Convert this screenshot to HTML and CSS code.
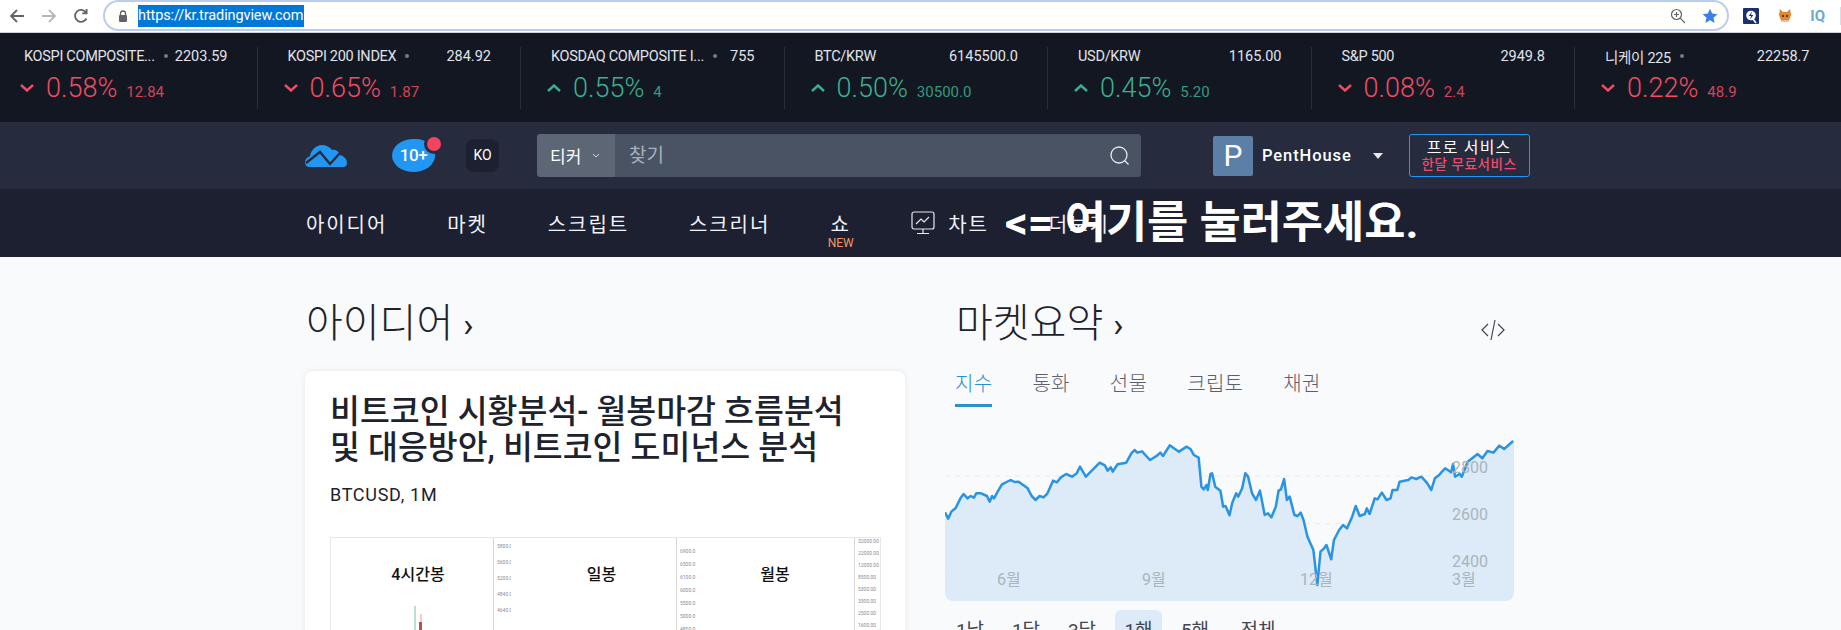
FILE: index.html
```html
<!DOCTYPE html>
<html lang="ko">
<head>
  <meta charset="UTF-8" />
  <title>TradingView</title>
  <link rel="stylesheet" href="styles.css">
</head>
<body>
  <!-- Browser toolbar -->
  <div class="toolbar">
    <svg class="tool-icon" width="16" height="16" viewBox="0 0 16 16"><path d="M15 8H2M8 2L2 8l6 6" fill="none" stroke="#5f6368" stroke-width="1.8"/></svg>
    <svg class="tool-icon" width="16" height="16" viewBox="0 0 16 16"><path d="M1 8h13M8 2l6 6-6 6" fill="none" stroke="#b4b7ba" stroke-width="1.8"/></svg>
    <svg class="tool-icon" width="16" height="16" viewBox="0 0 16 16"><path d="M13.5 10.5A6 6 0 1 1 13 4.5M13.6 1v4.4H9.2" fill="none" stroke="#5f6368" stroke-width="1.8"/></svg>
    <div class="urlbar">
      <svg class="lock" width="10" height="12" viewBox="0 0 10 12"><path d="M2.5 5V3.5a2.5 2.5 0 0 1 5 0V5" fill="none" stroke="#5f6368" stroke-width="1.3"/><rect x="1" y="5" width="8" height="7" rx="1" fill="#5f6368"/></svg>
      <span class="url-text">https://kr.tradingview.com</span>
      <svg class="url-zoom" width="16" height="16" viewBox="0 0 16 16"><circle cx="6.5" cy="6.5" r="5" fill="none" stroke="#5f6368" stroke-width="1.2"/><path d="M6.5 4v5M4 6.5h5M10.2 10.2L15 15" fill="none" stroke="#5f6368" stroke-width="1.2"/></svg>
      <svg class="url-star" width="16" height="16" viewBox="0 0 16 16"><path d="M8 .8l2.2 4.8 5.2.6-3.9 3.5 1.1 5.2L8 12.3l-4.6 2.6 1.1-5.2L.6 6.2l5.2-.6z" fill="#3b82e6"/></svg>
    </div>
    <div class="extensions">
      <svg width="16" height="16" viewBox="0 0 16 16"><rect width="16" height="16" rx="1" fill="#1a2f6e"/><circle cx="8" cy="7.5" r="4.8" fill="#fff"/><path d="M9 3.5L5.8 8h2.4L7 11.5 10.4 7H8z" fill="#1a2f6e"/><path d="M10 11l3 4" stroke="#fff" stroke-width="1.6"/></svg>
      <svg width="12" height="13" viewBox="0 0 12 13"><path d="M1 0l3 3h4l3-3 1 6-1 3-2 4H3L1 9 0 6z" fill="#e2852b"/><path d="M3 6h2v2H3zM7 6h2v2H7z" fill="#5b3a1c"/><path d="M3 11h6v2H3z" fill="#d9c3a8"/></svg>
      <span class="ext-iq">IQ</span>
      <span class="ext-sep"></span>
    </div>
  </div>

  <!-- Ticker tape -->
  <div class="ticker">
    <div class="ticker-item">
      <div class="ticker-top"><span class="ticker-name">KOSPI COMPOSITE...</span><span class="dot"></span><span class="ticker-price">2203.59</span></div>
      <div class="ticker-change down"><svg class="chev" width="14" height="8" viewBox="0 0 14 8"><path d="M1 1l6 5.5L13 1"/></svg><span class="pct">0.58%</span><span class="abs">12.84</span></div>
    </div>
    <div class="ticker-item">
      <div class="ticker-top"><span class="ticker-name">KOSPI 200 INDEX</span><span class="dot"></span><span class="ticker-price">284.92</span></div>
      <div class="ticker-change down"><svg class="chev" width="14" height="8" viewBox="0 0 14 8"><path d="M1 1l6 5.5L13 1"/></svg><span class="pct">0.65%</span><span class="abs">1.87</span></div>
    </div>
    <div class="ticker-item">
      <div class="ticker-top"><span class="ticker-name">KOSDAQ COMPOSITE I...</span><span class="dot"></span><span class="ticker-price">755</span></div>
      <div class="ticker-change up"><svg class="chev" width="14" height="8" viewBox="0 0 14 8"><path d="M1 7l6-5.5L13 7"/></svg><span class="pct">0.55%</span><span class="abs">4</span></div>
    </div>
    <div class="ticker-item">
      <div class="ticker-top"><span class="ticker-name">BTC/KRW</span><span class="ticker-price">6145500.0</span></div>
      <div class="ticker-change up"><svg class="chev" width="14" height="8" viewBox="0 0 14 8"><path d="M1 7l6-5.5L13 7"/></svg><span class="pct">0.50%</span><span class="abs">30500.0</span></div>
    </div>
    <div class="ticker-item">
      <div class="ticker-top"><span class="ticker-name">USD/KRW</span><span class="ticker-price">1165.00</span></div>
      <div class="ticker-change up"><svg class="chev" width="14" height="8" viewBox="0 0 14 8"><path d="M1 7l6-5.5L13 7"/></svg><span class="pct">0.45%</span><span class="abs">5.20</span></div>
    </div>
    <div class="ticker-item">
      <div class="ticker-top"><span class="ticker-name">S&amp;P 500</span><span class="ticker-price">2949.8</span></div>
      <div class="ticker-change down"><svg class="chev" width="14" height="8" viewBox="0 0 14 8"><path d="M1 1l6 5.5L13 1"/></svg><span class="pct">0.08%</span><span class="abs">2.4</span></div>
    </div>
    <div class="ticker-item">
      <div class="ticker-top"><span class="ticker-name">니케이 225</span><span class="dot"></span><span class="ticker-price">22258.7</span></div>
      <div class="ticker-change down"><svg class="chev" width="14" height="8" viewBox="0 0 14 8"><path d="M1 1l6 5.5L13 1"/></svg><span class="pct">0.22%</span><span class="abs">48.9</span></div>
    </div>
  </div>

  <!-- Site header -->
  <div class="header">
    <div class="wrap header-row">
      <svg class="logo" width="42" height="22" viewBox="0 0 42 22"><path d="M4 22C1 22 0 19 0 17c0-3 3-5 5-6C6 5 11 0 17 0c4 0 8 2 10 5 3-1 7 1 8 5 4 1 7 4 7 8 0 3-2 4-4 4z" fill="#2196f3"/><path d="M1 18L15 7l10 12 10-11" fill="none" stroke="#262b3e" stroke-width="2.4"/></svg>
      <div class="badge">10+<span class="badge-dot"></span></div>
      <div class="lang">KO</div>
      <div class="search">
        <div class="search-type">티커<svg width="8" height="5" viewBox="0 0 8 5"><path d="M1 1l3 3 3-3" fill="none" stroke="#d1d4dc" stroke-width="1"/></svg></div>
        <div class="search-input"><span class="search-hint">찾기</span><svg width="21" height="21" viewBox="0 0 21 21"><circle cx="10" cy="10" r="8" fill="none" stroke="#e6e8ee" stroke-width="1.3"/><path d="M15.5 15.5l4 4" stroke="#e6e8ee" stroke-width="1.3"/></svg></div>
      </div>
      <div class="avatar">P</div>
      <span class="username">PentHouse</span>
      <span class="caret"></span>
      <div class="pro">
        <span class="pro-top">프로 서비스</span>
        <span class="pro-bottom">한달 무료서비스</span>
      </div>
    </div>
  </div>

  <!-- Main nav -->
  <div class="nav">
    <div class="wrap nav-row">
      <span class="nav-item">아이디어</span>
      <span class="nav-item">마켓</span>
      <span class="nav-item">스크립트</span>
      <span class="nav-item">스크리너</span>
      <span class="nav-item nav-show">쇼<small>NEW</small></span>
      <span class="nav-item nav-chart"><svg width="24" height="24" viewBox="0 0 24 24"><rect x="1" y="1" width="22" height="17" rx="2" fill="none" stroke="#e6e8ee" stroke-width="1.2"/><path d="M5 13l5-5 3 3 5-5M12 18v4M6 22.5h12" fill="none" stroke="#e6e8ee" stroke-width="1.2"/></svg>차트</span>
      <span class="nav-item">더보기</span>
    </div>
    <div class="callout">&lt;= 여기를 눌러주세요.</div>
  </div>

  <!-- Page content -->
  <div class="wrap content">
    <div class="left-col">
      <h2 class="section-title">아이디어<span class="arrow">›</span></h2>
      <div class="card">
        <h3 class="card-title">비트코인 시황분석- 월봉마감 흐름분석<br>및 대응방안, 비트코인 도미넌스 분석</h3>
        <div class="card-symbol">BTCUSD, 1M</div>
        <div class="snapshot">
          <div class="panel panel-a">
            <span class="panel-label">4시간봉</span>
            <svg class="candles" width="20" height="50" viewBox="0 0 20 50"><path d="M6 0v50" stroke="#7fc4a0"/><path d="M12 8v42" stroke="#e89a9a"/><rect x="4" y="30" width="3" height="20" fill="#4caf7d"/><rect x="10" y="16" width="3" height="34" fill="#b5534f"/></svg>
          </div>
          <div class="axis">
            <span>5800.0</span><span>5600.0</span><span>5200.0</span><span>4840.0</span><span>4640.0</span>
          </div>
          <div class="panel panel-b"><span class="panel-label">일봉</span></div>
          <div class="axis axis-b">
            <span>6900.0</span><span>6500.0</span><span>6100.0</span><span>6000.0</span><span>5500.0</span><span>5000.0</span><span>4800.0</span>
          </div>
          <div class="panel panel-c">
            <span class="panel-label">월봉</span>
            <svg class="candles" width="12" height="14" viewBox="0 0 12 14"><path d="M5 0v14" stroke="#e89a9a"/><rect x="2" y="6" width="6" height="8" fill="#9a9a9a"/></svg>
          </div>
          <div class="axis axis-c">
            <span>32000.00</span><span>22000.00</span><span>12000.00</span><span>8500.00</span><span>5300.00</span><span>3300.00</span><span>2500.00</span><span>1600.00</span>
          </div>
        </div>
      </div>
    </div>

    <div class="right-col">
      <div class="market-head">
        <h2 class="section-title">마켓요약<span class="arrow">›</span></h2>
        <svg class="embed" width="26" height="22" viewBox="0 0 26 22"><path d="M8 5l-6 6 6 6M18 5l6 6-6 6M15 1l-4 20" fill="none" stroke="#434651" stroke-width="1.2"/></svg>
      </div>
      <div class="tabs">
        <span class="tab active">지수</span>
        <span class="tab">통화</span>
        <span class="tab">선물</span>
        <span class="tab">크립토</span>
        <span class="tab">채권</span>
      </div>
      <div class="market-chart">
        <svg class="market-svg" viewBox="39 480 1438 483" preserveAspectRatio="none">
          <path class="area" d="M39 697L47 716 55 695 66 684 78 655 86 642 96 655 104 648 112 653 118 640 130 640 145 648 152 665 158 648 163 655 172 635 183 613 205 600 215 606 225 605 248 625 258 648 268 660 278 648 288 652 298 640 312 602 322 607 332 592 345 582 360 590 372 580 380 560 395 590 405 578 430 548 443 556 450 572 458 562 463 575 475 553 497 548 510 520 518 510 525 518 537 514 557 540 575 527 583 518 590 528 607 496 630 515 650 500 660 508 668 525 680 533 687 620 693 628 700 615 703 630 710 582 714 580 722 620 735 632 742 680 748 678 758 706 765 668 775 640 780 650 790 625 798 580 805 590 815 640 825 660 835 632 847 705 855 700 864 712 875 680 882 632 888 628 896 597 903 660 910 650 922 705 930 708 938 698 945 720 955 770 970 810 980 915 988 815 997 805 1003 795 1015 838 1022 780 1035 750 1045 735 1055 745 1068 710 1077 678 1087 708 1100 702 1105 685 1112 702 1125 655 1132 658 1143 638 1155 660 1165 655 1170 630 1182 630 1188 605 1210 600 1218 592 1230 597 1243 590 1258 610 1268 630 1277 595 1288 585 1295 575 1303 565 1318 577 1323 552 1328 590 1340 582 1345 590 1360 545 1385 522 1397 535 1410 513 1425 518 1440 497 1452 507 1477 483V963H39Z"/>
          <path class="grid-line" d="M39 588H1477M39 731H1477M39 872H1477"/>
          <path class="line" d="M39 697L47 716 55 695 66 684 78 655 86 642 96 655 104 648 112 653 118 640 130 640 145 648 152 665 158 648 163 655 172 635 183 613 205 600 215 606 225 605 248 625 258 648 268 660 278 648 288 652 298 640 312 602 322 607 332 592 345 582 360 590 372 580 380 560 395 590 405 578 430 548 443 556 450 572 458 562 463 575 475 553 497 548 510 520 518 510 525 518 537 514 557 540 575 527 583 518 590 528 607 496 630 515 650 500 660 508 668 525 680 533 687 620 693 628 700 615 703 630 710 582 714 580 722 620 735 632 742 680 748 678 758 706 765 668 775 640 780 650 790 625 798 580 805 590 815 640 825 660 835 632 847 705 855 700 864 712 875 680 882 632 888 628 896 597 903 660 910 650 922 705 930 708 938 698 945 720 955 770 970 810 980 915 988 815 997 805 1003 795 1015 838 1022 780 1035 750 1045 735 1055 745 1068 710 1077 678 1087 708 1100 702 1105 685 1112 702 1125 655 1132 658 1143 638 1155 660 1165 655 1170 630 1182 630 1188 605 1210 600 1218 592 1230 597 1243 590 1258 610 1268 630 1277 595 1288 585 1295 575 1303 565 1318 577 1323 552 1328 590 1340 582 1345 590 1360 545 1385 522 1397 535 1410 513 1425 518 1440 497 1452 507 1475 483"/>
        </svg>
        <span class="y-label y-2800">2800</span>
        <span class="y-label y-2600">2600</span>
        <span class="y-label y-2400">2400</span>
        <span class="x-label x-jun">6월</span>
        <span class="x-label x-sep">9월</span>
        <span class="x-label x-dec">12월</span>
        <span class="x-label x-mar">3월</span>
      </div>
      <div class="ranges">
        <span class="range">1날</span>
        <span class="range">1달</span>
        <span class="range">3달</span>
        <span class="range active">1해</span>
        <span class="range">5해</span>
        <span class="range range-all">전체</span>
      </div>
    </div>
  </div>
</body>
</html>
```

FILE: styles.css
```css
/* Global */
html, body {
  height: 630px;
  overflow: hidden;
}

body {
  margin: 0;
  background: #f9fafb;
  color: #131722;
  font-family: Roboto, 'Noto Sans CJK KR', sans-serif;
}

.wrap {
  width: 1231px;
  margin: 0 auto;
}

/* Browser toolbar */
.toolbar {
  height: 33px;
  background: #fff;
  box-sizing: border-box;
  border-bottom: 1px solid #d0d2d6;
  display: flex;
  align-items: flex-start;
  padding-left: 9px;
}

.tool-icon {
  margin: 8px 16px 0 0;
}

.urlbar {
  margin-left: -2px;
  width: 1627px;
  height: 31px;
  box-sizing: border-box;
  border: 2px solid #b9cdf1;
  border-top-width: 2px;
  border-radius: 16px;
  display: flex;
  align-items: center;
  padding: 0 9px 0 13px;
  background: #fffffb;
}

.lock {
  margin-right: 10px;
}

.url-text {
  background: #0078d7;
  color: #fff;
  font-size: 14.5px;
  line-height: 22px;
  width: 166px;
  white-space: nowrap;
  letter-spacing: -0.1px;
}

.url-zoom {
  margin-left: auto;
  margin-right: 16px;
}

.extensions {
  display: flex;
  align-items: center;
  height: 31px;
  padding-left: 14px;
}

.extensions svg:nth-child(2) {
  margin-left: 20px;
}

.ext-iq {
  margin-left: 19px;
  color: #6aa8d8;
  font-size: 15px;
  font-weight: 700;
}

.ext-sep {
  margin-left: 15px;
  width: 1px;
  height: 18px;
  background: #dcdde0;
}

/* Ticker tape */
.ticker {
  height: 89px;
  background: #131722;
  box-sizing: border-box;
  padding: 14px 0 0;
  display: flex;
  margin-left: -6px;
  width: 1860px;
}

.ticker-item {
  width: 263.5px;
  flex: none;
  height: 62px;
  box-sizing: border-box;
  padding: 0 29px 0 30px;
  border-right: 1px solid #2a2e39;
}

.ticker-item:last-child {
  border-right: 0;
}

.ticker-top {
  display: flex;
  align-items: center;
  height: 18px;
  color: #e0e3eb;
  font-size: 14.5px;
}

.ticker-name {
  white-space: nowrap;
  letter-spacing: -0.3px;
}

.dot {
  width: 4px;
  height: 4px;
  border-radius: 50%;
  background: #787b86;
  margin-left: 9px;
}

.ticker-price {
  margin-left: auto;
}

.ticker-change {
  display: flex;
  align-items: baseline;
  margin: 8px 0 0 -4px;
  height: 30px;
}

.chev {
  align-self: center;
  fill: none;
  stroke: currentColor;
  stroke-width: 2.4;
  margin-right: 12px;
}

.pct {
  font-size: 27px;
  font-weight: 300;
  line-height: 30px;
}

.abs {
  font-size: 15px;
  margin-left: 9px;
  opacity: 0.85;
}

.up {
  color: #3bb08f;
}

.down {
  color: #ef4d62;
}

/* Site header */
.header {
  height: 67px;
  background: #262b3e;
}

.header-row {
  height: 100%;
  display: flex;
  align-items: center;
  color: #fff;
}

.badge {
  position: relative;
  margin-left: 45px;
  width: 43px;
  height: 33px;
  border-radius: 50% 45% 50% 50%;
  background: #2196f3;
  font-size: 17px;
  font-weight: 500;
  letter-spacing: -0.5px;
  line-height: 33px;
  text-align: center;
}

.badge-dot {
  position: absolute;
  top: -2px;
  right: -6px;
  width: 14px;
  height: 14px;
  border-radius: 50%;
  background: #f5425e;
  box-shadow: 0 0 0 3px #262b3e;
}

.lang {
  margin-left: 31px;
  width: 33px;
  height: 33px;
  border-radius: 8px;
  background: #1c2030;
  font-size: 14px;
  line-height: 33px;
  text-align: center;
}

.search {
  margin-left: 38px;
  width: 604px;
  height: 43px;
  display: flex;
  border-radius: 3px;
  overflow: hidden;
}

.search-type {
  width: 78px;
  flex: none;
  box-sizing: border-box;
  padding-left: 13px;
  background: #5d6675;
  font-size: 17px;
  display: flex;
  align-items: center;
  gap: 11px;
}

.search-input {
  flex: 1;
  background: #4a5364;
  color: #a8afba;
  font-size: 19px;
  padding: 0 11px 0 14px;
  display: flex;
  align-items: center;
  justify-content: space-between;
}

.search-hint {
  margin-bottom: 4px;
}

.avatar {
  margin-left: 72px;
  width: 40px;
  height: 40px;
  border-radius: 2px;
  background: #5b7fa6;
  font-size: 30px;
  line-height: 40px;
  text-align: center;
}

.username {
  margin-left: 9px;
  font-size: 16.5px;
  font-weight: 500;
  letter-spacing: 0.9px;
}

.caret {
  margin-left: 21px;
  border: 5px solid transparent;
  border-top: 6px solid #e6e8ee;
  border-bottom: 0;
}

.pro {
  margin-left: 26px;
  width: 121px;
  height: 43px;
  box-sizing: border-box;
  border: 1px solid #2196f3;
  border-radius: 3px;
  display: flex;
  flex-direction: column;
  align-items: center;
  justify-content: center;
  line-height: 16px;
}

.pro-top {
  font-size: 16px;
  letter-spacing: 1.2px;
}

.pro-bottom {
  font-size: 13.5px;
  font-weight: 500;
  color: #f5496b;
  letter-spacing: 0.6px;
}

/* Main nav */
.nav {
  position: relative;
  height: 68px;
  background: #1c2030;
}

.nav-row {
  height: 100%;
  display: flex;
  align-items: center;
  gap: 60px;
  color: #f0f3fa;
}

.nav-item {
  font-size: 20px;
  font-weight: 400;
  letter-spacing: 1.9px;
  white-space: nowrap;
}

.nav-item:first-child {
  margin-left: 1px;
}

.nav-show {
  position: relative;
  width: 27px;
  margin-left: -3px;
  text-align: center;
}

.nav-show small {
  position: absolute;
  top: 27px;
  left: 0;
  width: 27px;
  font-size: 12px;
  letter-spacing: 0;
  color: #f79560;
}

.nav-chart {
  display: flex;
  align-items: center;
  gap: 13px;
  margin-left: -3px;
}

/* Drawn over the nav by whoever took the screenshot */
.callout {
  position: absolute;
  left: 1005px;
  top: 4px;
  color: #fff;
  font-size: 44.8px;
  font-weight: 700;
  line-height: 60px;
  white-space: nowrap;
}

/* Page content */
.content {
  display: flex;
  gap: 40px;
}

.left-col {
  width: 600px;
  flex: none;
}

.right-col {
  width: 569px;
  flex: none;
}

.section-title {
  margin: 0;
  padding-top: 43px;
  font-size: 40px;
  font-weight: 300;
  line-height: 48px;
  color: #1e222d;
}

.left-col .section-title {
  padding-left: 1px;
}

.arrow {
  margin-left: 10px;
  font-weight: 400;
  font-size: 34px;
}

.card {
  margin-top: 22px;
  height: 300px;
  box-sizing: border-box;
  background: #fff;
  border-radius: 8px;
  box-shadow: 0 0 6px rgba(0, 0, 0, 0.08);
  padding: 23px 25px 0;
}

.card-title {
  margin: 0;
  font-size: 32.5px;
  font-weight: 500;
  line-height: 36px;
  color: #1e222d;
  white-space: nowrap;
}

.card-symbol {
  margin-top: 17px;
  font-size: 18px;
  line-height: 24px;
  letter-spacing: 0.7px;
  color: #1e222d;
}

.snapshot {
  margin-top: 30px;
  display: flex;
  height: 120px;
  border: 1px solid #e6e8ea;
  width: 551px;
  box-sizing: border-box;
}

.panel {
  position: relative;
  display: flex;
  justify-content: center;
  color: #111;
}

.panel-a {
  width: 162px;
  padding-left: 12px;
  box-sizing: border-box;
}

.panel-b {
  width: 165px;
  padding-left: 16px;
  box-sizing: border-box;
}

.panel-c {
  width: 158px;
}

.panel-label {
  font-size: 16px;
  font-weight: 500;
  margin-top: 25px;
  line-height: 24px;
  white-space: nowrap;
}

.candles {
  position: absolute;
  left: 78px;
  bottom: 0;
}

.panel-c .candles {
  left: 120px;
}

.axis {
  width: 18px;
  flex: none;
  box-sizing: border-box;
  border-left: 1px solid #d5d7da;
  padding: 5px 0 0 3px;
  display: flex;
  flex-direction: column;
  gap: 10px;
  font-size: 5px;
  line-height: 6px;
  color: #8a8e96;
  overflow: hidden;
}

.axis-b {
  width: 20px;
  padding-top: 10px;
  gap: 7px;
}

.axis-c {
  width: 25px;
  padding-top: 0;
  gap: 6px;
}

/* Market summary */
.market-head {
  display: flex;
  justify-content: space-between;
  align-items: flex-end;
  padding-left: 11px;
}

.embed {
  margin: 0 8px 8px 0;
}

.tabs {
  margin-top: 20px;
  padding-left: 10px;
  display: flex;
  gap: 40px;
  height: 38px;
}

.tab {
  font-size: 20px;
  line-height: 30px;
  letter-spacing: 0.3px;
  color: #5d606b;
  font-weight: 300;
}

.tab.active {
  color: #2e8fd0;
  border-bottom: 3px solid #2e8fd0;
}

.market-chart {
  position: relative;
  margin-top: 33px;
  height: 161px;
  border-radius: 0 0 8px 8px;
  overflow: hidden;
}

.market-svg {
  display: block;
  width: 100%;
  height: 100%;
}

.area {
  fill: #dcebf7;
}

.grid-line {
  fill: none;
  stroke: #e4eaf0;
  stroke-width: 1;
  stroke-dasharray: 5 5;
  vector-effect: non-scaling-stroke;
}

.line {
  fill: none;
  stroke: #2a93e3;
  stroke-width: 2.5;
  stroke-linejoin: round;
  vector-effect: non-scaling-stroke;
}

.y-label,
.x-label {
  position: absolute;
  font-size: 16px;
  line-height: 18px;
  color: #aab4bf;
}

.y-label {
  left: 507px;
}

.y-2800 { top: 19px; }
.y-2600 { top: 66px; }
.y-2400 { top: 113px; }

.x-label {
  top: 131px;
}

.x-jun { left: 52px; }
.x-sep { left: 197px; }
.x-dec { left: 355px; }
.x-mar { left: 507px; }

.ranges {
  margin-top: 9px;
  display: flex;
  margin-left: -3px;
}

.range {
  width: 56px;
  box-sizing: border-box;
  padding: 9px 0;
  font-size: 19px;
  line-height: 24px;
  text-align: center;
  color: #434651;
  border-radius: 6px;
}

.range.active {
  background: #dcebf7;
  width: 47px;
  margin: 0 5px;
}

.range-all {
  margin-left: 7px;
}
```
